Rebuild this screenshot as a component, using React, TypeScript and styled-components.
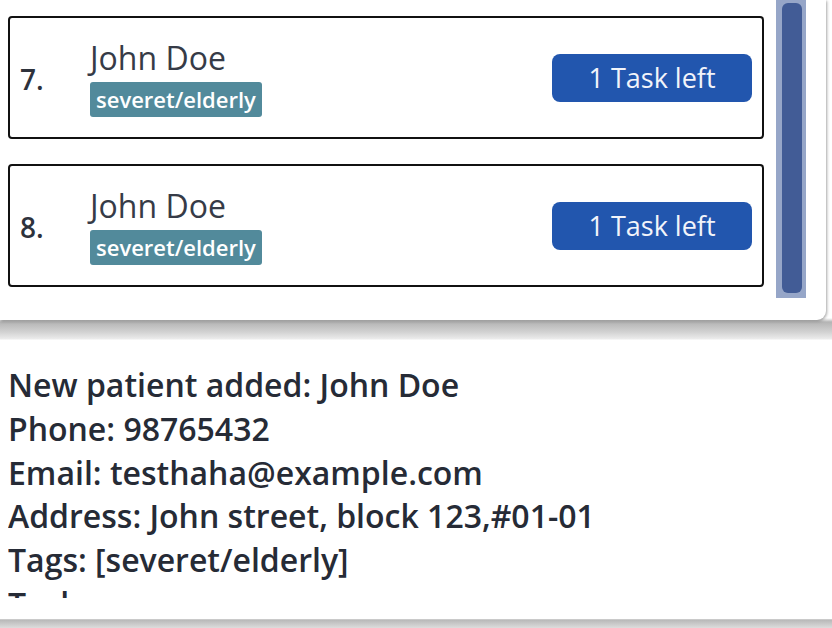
import React from "react";
import styled, { createGlobalStyle } from "styled-components";

const Global = createGlobalStyle`
  html, body { margin: 0; padding: 0; background: #ffffff; }
  body { font-family: "Open Sans", "Noto Sans", sans-serif; width: 832px; height: 628px; overflow: hidden; }
`;

const Page = styled.div`
  display: flex;
  flex-direction: column;
  width: 832px;
  height: 628px;
`;

const TopArea = styled.div`
  height: 340px;
  display: flex;
  flex-direction: column;
  background: linear-gradient(to bottom, #ffffff 0px, #ffffff 318px, #b4b4b4 322px, #d2d2d2 332px, #ececec 339px, #ffffff 340px);
`;

const ListPanel = styled.div`
  width: 826px;
  height: 320px;
  box-sizing: border-box;
  background: #ffffff;
  border-bottom-right-radius: 9px;
  box-shadow: 1px 1px 3px rgba(0, 0, 0, 0.35);
  display: flex;
  gap: 12px;
  padding: 0 20px 0 8px;
`;

const List = styled.div`
  flex: 1;
  display: flex;
  flex-direction: column;
  gap: 25px;
  padding-top: 16px;
`;

const Card = styled.div`
  height: 123px;
  box-sizing: border-box;
  border: 2px solid #111111;
  border-radius: 4px;
  display: flex;
  align-items: center;
  padding: 0 10px 0 10px;
`;

const Index = styled.div`
  width: 70px;
  font-size: 28px;
  font-weight: 600;
  color: #2e323c;
  padding-top: 2px;
`;

const Info = styled.div`
  flex: 1;
  display: flex;
  flex-direction: column;
  align-items: flex-start;
  gap: 6px;
  margin-top: 1px;
`;

const Name = styled.div`
  font-size: 32px;
  line-height: 36px;
  color: #363b47;
`;

const Tag = styled.span`
  background: #528a9b;
  color: #ffffff;
  font-size: 22px;
  font-weight: 600;
  line-height: 35px;
  padding: 0 6px;
  border-radius: 3px;
`;

const TaskButton = styled.div`
  width: 200px;
  height: 48px;
  border-radius: 8px;
  background: #2256ae;
  color: #f2f4fa;
  font-size: 27px;
  display: flex;
  align-items: center;
  justify-content: center;
`;

const ScrollTrack = styled.div`
  width: 30px;
  height: 298px;
  background: #96a6c8;
  box-sizing: border-box;
  padding: 3px 4px 5px 6px;
  display: flex;
`;

const ScrollThumb = styled.div`
  flex: 1;
  background: #425c96;
  border-radius: 6px;
`;

const ResultArea = styled.div`
  flex: 1;
  display: flex;
  flex-direction: column;
  background: linear-gradient(to bottom, #ffffff 0px, #ffffff 278px, #b8b8b8 280px, #dcdcdc 288px);
`;

const ResultPanel = styled.div`
  height: 279px;
  background: #ffffff;
  padding: 23px 0 0 8px;
  box-sizing: border-box;
`;

const ResultText = styled.div`
  height: 235px;
  overflow: hidden;
`;

const ResultLine = styled.div`
  font-size: 32px;
  font-weight: 600;
  line-height: 43.75px;
  color: #262b36;
  white-space: nowrap;
`;

const patients = [
  { idx: 7, name: "John Doe", tag: "severet/elderly", tasks: "1 Task left" },
  { idx: 8, name: "John Doe", tag: "severet/elderly", tasks: "1 Task left" },
];

const lines = [
  "New patient added: John Doe",
  "Phone: 98765432",
  "Email: testhaha@example.com",
  "Address: John street, block 123,#01-01",
  "Tags: [severet/elderly]",
  "Tasks:",
];

export default function App() {
  return (
    <Page>
      <Global />
      <TopArea>
        <ListPanel>
          <List>
            {patients.map((p) => (
              <Card key={p.idx}>
                <Index>{p.idx}.</Index>
                <Info>
                  <Name>{p.name}</Name>
                  <Tag>{p.tag}</Tag>
                </Info>
                <TaskButton>{p.tasks}</TaskButton>
              </Card>
            ))}
          </List>
          <ScrollTrack>
            <ScrollThumb />
          </ScrollTrack>
        </ListPanel>
      </TopArea>
      <ResultArea>
        <ResultPanel>
          <ResultText>
            {lines.map((l) => (
              <ResultLine key={l}>{l}</ResultLine>
            ))}
          </ResultText>
        </ResultPanel>
      </ResultArea>
    </Page>
  );
}
